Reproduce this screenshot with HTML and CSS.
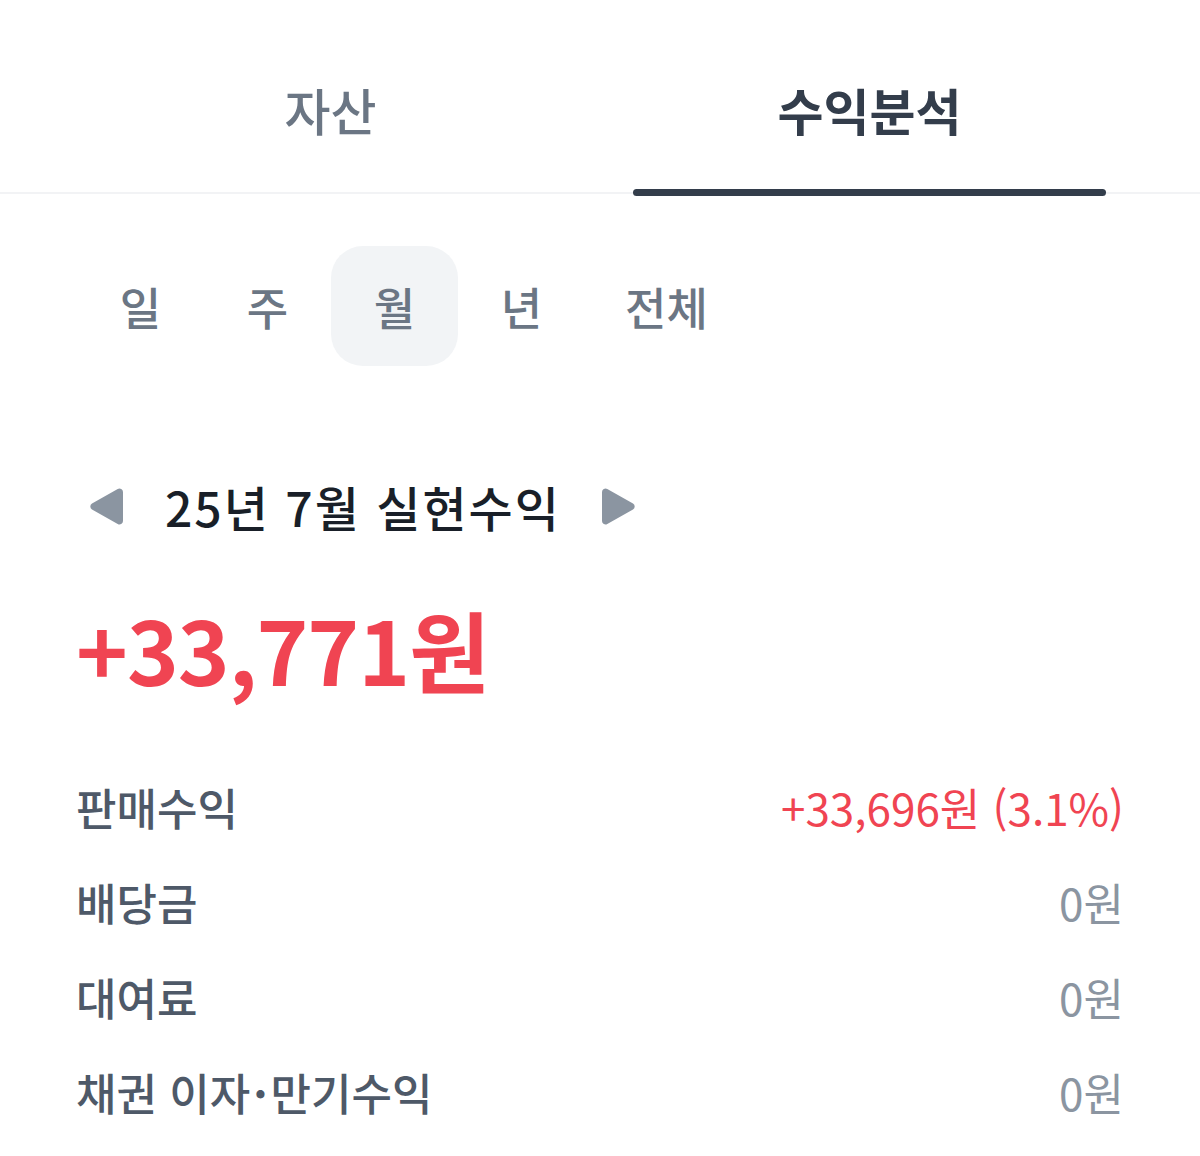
FILE: index.html
```html
<!DOCTYPE html>
<html lang="ko">
<head>
  <meta charset="UTF-8" />
  <meta name="viewport" content="width=device-width, initial-scale=1.0" />
  <title>수익분석</title>
  <link rel="stylesheet" href="styles.css">
</head>
<body>
  <div class="tabs">
    <div class="tab">자산</div>
    <div class="tab active">수익분석</div>
  </div>

  <div class="content">
    <div class="periods">
      <button class="period">일</button>
      <button class="period">주</button>
      <button class="period selected">월</button>
      <button class="period">년</button>
      <button class="period">전체</button>
    </div>

    <div class="month-nav">
      <span class="arrow prev">
        <svg width="33" height="37" viewBox="0 0 33 37"><path d="M33 4v29a3.5 3.5 0 0 1-5.3 3L2 21.5a3.5 3.5 0 0 1 0-6L27.7 1a3.5 3.5 0 0 1 5.3 3z" fill="#8b95a1"/></svg>
      </span>
      <h2 class="month-title">25년 7월 실현수익</h2>
      <span class="arrow">
        <svg width="33" height="37" viewBox="0 0 33 37"><path d="M0 4v29a3.5 3.5 0 0 0 5.3 3L31 21.5a3.5 3.5 0 0 0 0-6L5.3 1A3.5 3.5 0 0 0 0 4z" fill="#8b95a1"/></svg>
      </span>
    </div>

    <div class="total">+33,771원</div>

    <ul class="breakdown">
      <li><span class="label">판매수익</span><span class="value plus">+33,696원 (3.1%)</span></li>
      <li><span class="label">배당금</span><span class="value">0원</span></li>
      <li><span class="label">대여료</span><span class="value">0원</span></li>
      <li><span class="label">채권 이자<span class="dot">·</span>만기수익</span><span class="value">0원</span></li>
    </ul>
  </div>
</body>
</html>
```

FILE: styles.css
```css
* { box-sizing: border-box; }
body { margin: 0; background: #fff; font-family: "Noto Sans CJK KR", "Noto Sans", sans-serif; color: #191f28; }

.tabs { display: grid; grid-template-columns: 1fr 1fr; gap: 66px; padding: 0 94px; border-bottom: 2px solid #f2f3f5; }
.tab { position: relative; height: 192px; padding-top: 26px; display: flex; align-items: center; justify-content: center; font-size: 50px; font-weight: 500; color: #6b7684; }
.tab.active { color: #333d4b; font-weight: 700; }
.tab.active::after { content: ""; position: absolute; left: 0; right: 0; bottom: -4px; height: 7px; border-radius: 4px; background: #333d4b; }

.content { padding: 0 76px; }

.periods { display: flex; margin-top: 52px; margin-left: 1px; }
.period { height: 120px; min-width: 127px; padding: 0 40px; border: 0; border-radius: 32px; background: none; font-family: inherit; font-size: 45px; font-weight: 500; color: #6b7684; }
.period.selected { background: #f2f4f6; }

.month-nav { display: flex; align-items: center; height: 60px; margin-top: 110px; }
.arrow { display: flex; }
.arrow.prev { margin-left: 14px; }
.month-title { margin: 0 41px 0 42px; font-size: 48px; font-weight: 500; letter-spacing: 2px; color: #191f28; }

.total { margin-top: 62px; height: 100px; line-height: 100px; font-size: 88px; font-weight: 700; color: #f04452; letter-spacing: -1px; }

.breakdown { list-style: none; margin: 61px 0 0; padding: 0; }
.breakdown li { display: flex; justify-content: space-between; align-items: center; height: 95px; }
.label { font-size: 44px; font-weight: 500; color: #4e5968; }
.dot { margin: 0 3px; font-weight: 700; }
.value { font-size: 44px; font-weight: 400; color: #8b95a1; }
.value.plus { color: #f04452; }
```
